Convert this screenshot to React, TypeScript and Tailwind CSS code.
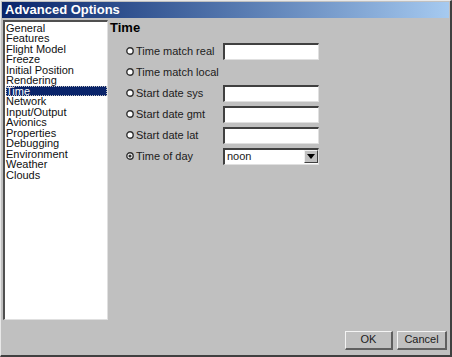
import React from "react";

const pages = [
  "General",
  "Features",
  "Flight Model",
  "Freeze",
  "Initial Position",
  "Rendering",
  "Time",
  "Network",
  "Input/Output",
  "Avionics",
  "Properties",
  "Debugging",
  "Environment",
  "Weather",
  "Clouds",
];

const options = [
  { label: "Time match real", field: true },
  { label: "Time match local", field: false },
  { label: "Start date sys", field: true },
  { label: "Start date gmt", field: true },
  { label: "Start date lat", field: true },
  { label: "Time of day", field: "select" as const, checked: true },
];

const Radio: React.FC<{ checked?: boolean }> = ({ checked }) => (
  <svg width="8" height="8" viewBox="0 0 8 8" className="shrink-0">
    <circle cx="4" cy="4" r="3.2" fill="#fff" stroke="#303030" strokeWidth="1.4" />
    {checked && <circle cx="4" cy="4" r="1.6" fill="#303030" />}
  </svg>
);

const Sunken: React.FC<{ children?: React.ReactNode }> = ({ children }) => (
  <div className="w-[96px] h-[17px] bg-white border-t-2 border-l-2 border-t-[#404040] border-l-[#404040] border-b border-r border-b-[#e0e0e0] border-r-[#e0e0e0] flex items-center">
    {children}
  </div>
);

const App: React.FC = () => {
  return (
    <div
      className="w-[452px] h-[357px] bg-[#c0c0c0] border-t border-l border-t-[#e8e8e8] border-l-[#e8e8e8] border-b-2 border-r-2 border-b-[#404040] border-r-[#404040] flex flex-col text-black"
      style={{ fontFamily: '"Liberation Sans", Arial, sans-serif' }}
    >
      <div className="mx-[1px] mt-[1px] h-[16px] bg-gradient-to-r from-[#0a246a] to-[#a6caf0] flex items-center pl-[3px]">
        <span className="text-white font-bold text-[13px] leading-none">Advanced Options</span>
      </div>

      <div className="flex flex-1 pl-[2px] pt-[2px]">
        <div className="w-[105px] h-[300px] bg-white border-t-2 border-l-2 border-t-[#505050] border-l-[#505050] border-b border-r border-b-[#e0e0e0] border-r-[#e0e0e0] pt-[1px] pl-[1px]">
          {pages.map((p) => (
            <div
              key={p}
              className={
                "h-[10.5px] text-[11px] leading-[10.5px] " +
                (p === "Time"
                  ? "bg-[#0a246a] text-white outline-1 outline-dotted outline-[#c0c0c0] -outline-offset-1"
                  : "text-[#101010]")
              }
            >
              {p}
            </div>
          ))}
        </div>

        <div className="flex-1 pl-[2px]">
          <div className="text-[13px] font-bold leading-[15px]">Time</div>
          <div className="mt-[6px] flex flex-col">
            {options.map((o) => (
              <div key={o.label} className="h-[21px] flex items-center pl-[16px]">
                <Radio checked={o.checked} />
                <span className="ml-[2px] w-[87px] text-[11px] text-[#202020]">{o.label}</span>
                {o.field === "select" ? (
                  <Sunken>
                    <span className="flex-1 text-[11px] pl-[2px] text-[#202020]">noon</span>
                    <div className="w-[14px] h-[13px] bg-[#c0c0c0] border-t border-l border-t-[#f0f0f0] border-l-[#f0f0f0] border-b border-r border-b-[#404040] border-r-[#404040] flex items-center justify-center">
                      <svg width="8" height="5" viewBox="0 0 8 5">
                        <polygon points="0,0 8,0 4,5" fill="#000" />
                      </svg>
                    </div>
                  </Sunken>
                ) : o.field ? (
                  <Sunken />
                ) : null}
              </div>
            ))}
          </div>
        </div>
      </div>

      <div className="h-[36px] flex justify-end items-start gap-[4px] pr-[3px] pt-[11px]">
        {["OK", "Cancel"].map((b) => (
          <button
            key={b}
            className={
              "h-[19px] bg-[#c0c0c0] border-t border-l border-t-[#f4f4f4] border-l-[#f4f4f4] border-b-2 border-r-2 border-b-[#606060] border-r-[#606060] text-[11px] text-[#202020] leading-none " +
              (b === "OK" ? "w-[48px]" : "w-[50px]")
            }
          >
            {b}
          </button>
        ))}
      </div>
    </div>
  );
};

export default App;
